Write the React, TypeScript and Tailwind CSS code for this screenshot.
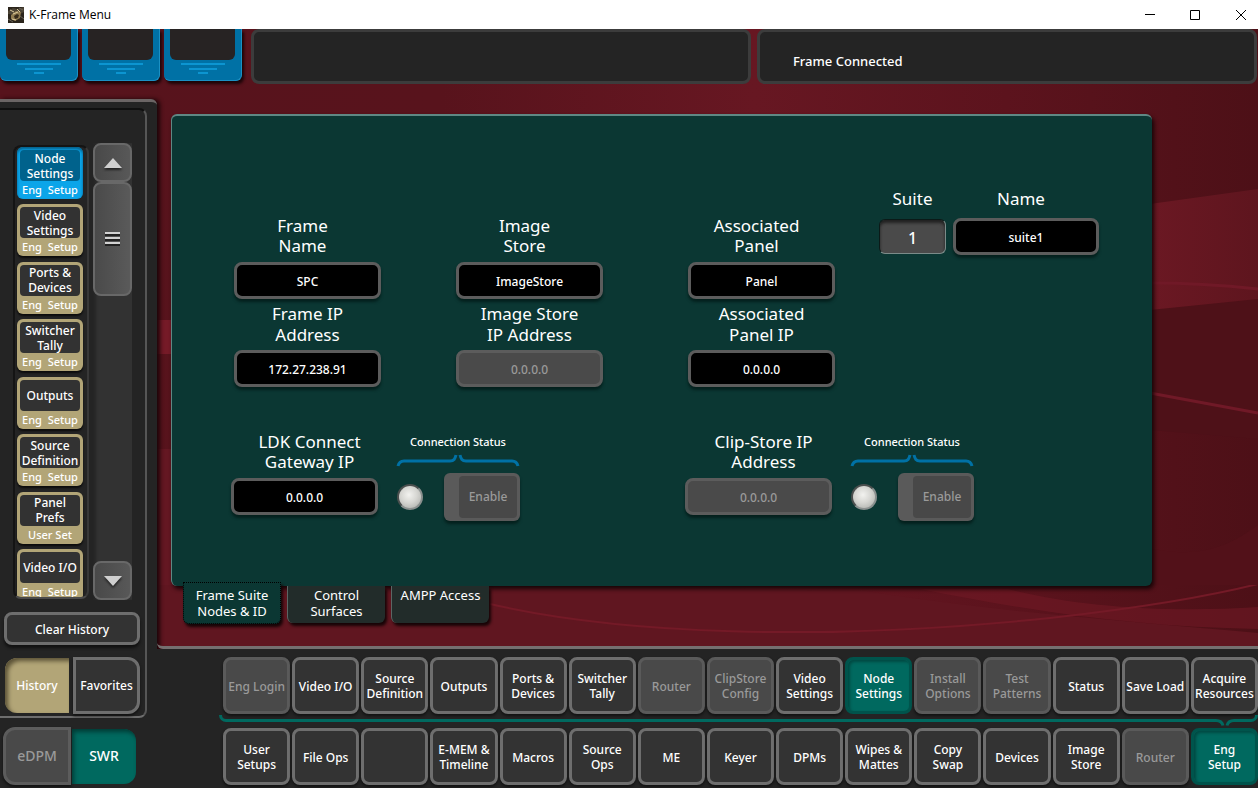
import clsx from "clsx";
import { useState } from "react";

const historyItems = [
    { name: "Node Settings", group: "Eng  Setup", active: true },
    { name: "Video Settings", group: "Eng  Setup" },
    { name: "Ports & Devices", group: "Eng  Setup" },
    { name: "Switcher Tally", group: "Eng  Setup" },
    { name: "Outputs", group: "Eng  Setup" },
    { name: "Source Definition", group: "Eng  Setup" },
    { name: "Panel Prefs", group: "User Set" },
    { name: "Video I/O", group: "Eng  Setup" },
];

type MenuButton = { name: string; state?: "active" | "disabled" };

const subMenu: MenuButton[] = [
    { name: "Eng Login", state: "disabled" },
    { name: "Video I/O" },
    { name: "Source Definition" },
    { name: "Outputs" },
    { name: "Ports & Devices" },
    { name: "Switcher Tally" },
    { name: "Router", state: "disabled" },
    { name: "ClipStore Config", state: "disabled" },
    { name: "Video Settings" },
    { name: "Node Settings", state: "active" },
    { name: "Install Options", state: "disabled" },
    { name: "Test Patterns", state: "disabled" },
    { name: "Status" },
    { name: "Save Load" },
    { name: "Acquire Resources" },
];

const mainMenu: MenuButton[] = [
    { name: "User Setups" },
    { name: "File Ops" },
    { name: "" },
    { name: "E-MEM & Timeline" },
    { name: "Macros" },
    { name: "Source Ops" },
    { name: "ME" },
    { name: "Keyer" },
    { name: "DPMs" },
    { name: "Wipes & Mattes" },
    { name: "Copy Swap" },
    { name: "Devices" },
    { name: "Image Store" },
    { name: "Router", state: "disabled" },
    { name: "Eng Setup", state: "active" },
];

const tabs = ["Frame Suite Nodes & ID", "Control Surfaces", "AMPP Access"];

const oneLine = ["Eng Login", "Video I/O", "File Ops", "Save Load"];

export default function App() {
    return (
        <div className="flex min-h-screen flex-col overflow-hidden bg-[#242424] font-['Noto_Sans','Open_Sans',sans-serif] text-xs font-medium text-white">
            <TitleBar />
            <div className="relative isolate flex flex-1 flex-col">
                <Backdrop />
                <StatusStrip />
                <div className="mt-4 flex flex-1">
                    <Sidebar />
                    <main className="flex min-w-0 flex-1 flex-col">
                        <div className="flex-1 rounded-bl-md border-b-[3px] border-[#757070] pt-[15px] pr-[106px] pb-5 pl-[14px]">
                            <NodePanel />
                            <PanelTabs />
                        </div>
                        <MenuBar />
                    </main>
                </div>
            </div>
        </div>
    );
}

function TitleBar() {
    return (
        <header className="flex h-[29px] items-center bg-white pl-2 text-black">
            <svg width="16" height="16" viewBox="0 0 16 16">
                <rect width="16" height="16" fill="#2b251c" />
                <path d="M0 4 5 1l4 1 7-2v5l-6 3-10-1z" fill="#4b4335" />
                <path d="M3 8 8 4l5 1-1 6-5 3-4-2z" fill="#8f7b50" />
                <path d="M6 9 9 7l2 1-1 3-3 1z" fill="#352b1b" />
                <path d="M2 3l4 2M9 2l3 3M5 7l5-2M4 12l4 1" stroke="#d9c99b" strokeWidth="1" />
                <path d="M0 12l5 3M12 9l4 3M11 1l4 2" stroke="#6a6357" strokeWidth="1" />
            </svg>
            <h1 className="ml-[5px] flex-1 font-['Open_Sans','Noto_Sans',sans-serif] text-xs font-normal">K-Frame Menu</h1>
            <button aria-label="Minimize" className="flex h-full w-[45px] items-center justify-center">
                <svg width="10" height="10" viewBox="0 0 10 10" stroke="black" fill="none"><path d="M0 4.5h10" /></svg>
            </button>
            <button aria-label="Maximize" className="flex h-full w-[45px] items-center justify-center">
                <svg width="10" height="10" viewBox="0 0 10 10" stroke="black" fill="none"><path d="M.5.5h9v9h-9z" /></svg>
            </button>
            <button aria-label="Close" className="flex h-full w-[41px] items-center justify-center pl-[6px]">
                <svg width="10" height="10" viewBox="0 0 10 10" stroke="black" fill="none"><path d="M0 0l10 10M10 0 0 10" /></svg>
            </button>
        </header>
    );
}

/* Red artwork behind everything */
function Backdrop() {
    return (
        <svg className="absolute inset-0 -z-10 h-full w-full" viewBox="0 0 1258 759" preserveAspectRatio="none">
            <defs>
                <linearGradient id="base" x1="0" y1="0" x2="1" y2="0">
                    <stop offset="0" stopColor="#57131c" />
                    <stop offset="0.35" stopColor="#58131c" />
                    <stop offset="0.6" stopColor="#671722" />
                    <stop offset="0.8" stopColor="#5c131d" />
                    <stop offset="1" stopColor="#4d1017" />
                </linearGradient>
                <linearGradient id="band" x1="0" y1="0" x2="1" y2="0">
                    <stop offset="0" stopColor="#6b1823" />
                    <stop offset="1" stopColor="#5e151e" />
                </linearGradient>
            </defs>
            <rect width="1258" height="759" fill="url(#base)" />
            <path d="M1150 175 1258 160v125l-108-3z" fill="url(#band)" />
            <path d="M1150 281 1258 270v140l-108-9z" fill="#4e1118" />
            <path d="M1150 254c40 0 80 3 108 6M1150 364l108 20" stroke="#701927" strokeWidth="3" fill="none" />
            <path d="M157 291h16v34h-16z" fill="#751a27" />
            <path d="M157 420h16v170h-16z" fill="#641722" />
            <path d="M157 556h330l380 6c120 20 260 30 391 42v14H157z" fill="#601620" />
            <path d="M920 560c120 24 220 38 338 40v-22c-90 6-180 0-250-18z" fill="#701925" opacity=".6" />
            <path d="M490 575c130 30 330 38 560 14 90-10 160-22 208-34" stroke="#741a27" strokeWidth="2" fill="none" />
            <path d="M1152 556h106v-60c-40 30-70 30-106 24z" fill="#521119" />
        </svg>
    );
}

function StatusStrip() {
    return (
        <div className="flex h-[54px]">
            <div className="flex w-[251px] gap-1">
                {[0, 1, 2].map((n) => (
                    <div key={n} className="h-[52px] w-[78px] rounded-b-md border-r border-b border-[#1b91c4] bg-[#0071a5] px-[6px] shadow-[2px_3px_3px_#1c0508]">
                        <div className="h-[31px] rounded-b-md bg-[#272323]" />
                        <svg className="mx-auto mt-[2px] block" width="44" height="14" viewBox="0 0 44 14" stroke="#11a1df" strokeWidth="1.5">
                            <path d="M0 2h44M8 7h28M17 11h10" />
                        </svg>
                    </div>
                ))}
            </div>
            <div className="mr-[6px] h-[55px] flex-1 rounded-lg border-[3px] border-[#3c3c3c] bg-[#242424]" />
            <div role="status" className="mr-px flex h-[55px] flex-1 items-center rounded-lg border-[3px] border-[#3c3c3c] bg-[#242424] text-[13px]">
                <span className="mt-[10px] ml-[33px]">Frame Connected</span>
            </div>
        </div>
    );
}

function Sidebar() {
    return (
        <aside className="flex w-[157px] shrink-0 flex-col rounded-tr-md border-t-[3px] border-[#6b6565] bg-[#242424] shadow-[3px_0_4px_#1c0508]">
            <div className="mt-[6px] mr-[10px] flex flex-col rounded-r-lg border-t-2 border-r-2 border-b-2 border-t-[#101010] border-r-[#565656] border-b-[#6e6e6e] pb-[2px]">
                <div className="mt-[33px] flex gap-1 pl-[13px]">
                    <div className="mt-[2px] h-[454px] w-[76px] overflow-hidden rounded-lg border-2 border-[#141414] border-r-[#383838] border-b-[#4a4a4a] px-[2px]">
                        {/* last entry is cut off by the scroll window */}
                        <ul className="flex h-[454px] flex-col justify-between">
                            {historyItems.map((item) => (
                                <HistoryItem key={item.name} {...item} />
                            ))}
                        </ul>
                    </div>
                    <Scrollbar />
                </div>
                <button className="mt-3 ml-1 h-[33px] w-[136px] rounded-lg border-[3px] border-[#6e6e6e] bg-[#333] pt-[2px] shadow-[0_3px_3px_#111]">
                    Clear History
                </button>
                <div className="mt-3 ml-[5px] flex h-[57px] items-center gap-1">
                    <button className="h-[55px] w-16 rounded-l-xl bg-[#b2a577] shadow-[inset_3px_3px_4px_#5c5337]">History</button>
                    <button className="h-[57px] w-[67px] rounded-r-xl border-[3px] border-[#6e6e6e] bg-[#333] shadow-[0_2px_3px_#111]">Favorites</button>
                </div>
            </div>
            <div className="mt-[9px] ml-[3px] flex h-[58px] items-center gap-px text-sm">
                <button className="h-[58px] w-[68px] rounded-l-xl border-[3px] border-[#5c5c5c] bg-[#494949] text-[#9a9a9a] shadow-[0_2px_3px_#111]">eDPM</button>
                <button className="h-[55px] w-16 rounded-r-xl bg-[#00695f] shadow-[inset_2px_3px_4px_#003c36]">SWR</button>
            </div>
        </aside>
    );
}

function HistoryItem({ name, group, active }: { name: string; group: string; active?: boolean }) {
    return (
        <li>
            <button
                className={clsx(
                    "flex h-[52px] w-[66px] flex-col rounded-md px-[3px] pt-[3px]",
                    active ? "bg-[#0ba5e9] shadow-[inset_0_2px_3px_#045c86]" : "bg-[#b2a577] shadow-[0_2px_2px_#0c0c0c]"
                )}
            >
                <span className={clsx("flex h-[31px] w-full shrink-0 items-center justify-center rounded leading-[15px]", active ? "bg-[#00628c]" : "bg-[#323232]")}>
                    <ButtonLabel name={name} />
                </span>
                <span className="w-full text-center text-[11px] leading-[17px] whitespace-pre">{group}</span>
            </button>
        </li>
    );
}

function Scrollbar() {
    return (
        <div className="flex h-[457px] w-[39px] flex-col bg-[#323232] shadow-[inset_3px_0_3px_#262626]">
            <ArrowButton label="Scroll up" points="0,10 9,0 18,10" />
            <div className="flex h-[114px] items-center justify-center rounded-lg border-2 border-[#686868] bg-linear-to-r from-[#4a4a4a] to-[#5a5a5a]">
                <svg width="15" height="14" viewBox="0 0 15 14">
                    <path d="M0 3h15M0 8h15M0 13h15" stroke="#222" strokeWidth="2" />
                    <path d="M0 1h15M0 6h15M0 11h15" stroke="#d2d2d2" strokeWidth="2" />
                </svg>
            </div>
            <div className="flex-1" />
            <ArrowButton label="Scroll down" points="0,0 9,10 18,0" />
        </div>
    );
}

function ArrowButton({ label, points }: { label: string; points: string }) {
    return (
        <button aria-label={label} className="flex h-[39px] items-center justify-center rounded-lg border-2 border-[#686868] bg-linear-to-r from-[#494949] to-[#585858]">
            <svg className="drop-shadow-[0_2px_1px_#222]" width="18" height="10" viewBox="0 0 18 10" fill="#cfcfcf">
                <polygon points={points} />
            </svg>
        </button>
    );
}

function NodePanel() {
    return (
        <section className="flex h-[472px] flex-col rounded-md border-t-2 border-l border-[#5f8884] bg-[#0b3733] pl-[59px] shadow-[2px_3px_4px_#160406]">
            <div className="mt-[73px] flex">
                <div className="mt-[27px] flex">
                    <FieldPair first="Frame Name" firstValue="SPC" second="Frame IP Address" secondValue="172.27.238.91" className="ml-[3px]" />
                    <FieldPair first="Image Store" firstValue="ImageStore" second="Image Store IP Address" secondValue="0.0.0.0" secondDisabled className="ml-[75px]" />
                    <FieldPair first="Associated Panel" firstValue="Panel" second="Associated Panel IP" secondValue="0.0.0.0" className="ml-[85px]" />
                </div>
                <div className="ml-11 flex gap-[7px]">
                    <div className="flex w-[67px] flex-col items-center">
                        <span className="text-[17px] leading-5 font-normal">Suite</span>
                        <button className="mt-[10px] h-[35px] w-full rounded-md border border-[#0b1a18] border-r-[#7b8b89] border-b-[#7b8b89] bg-[#4a4a4a] pt-[2px] text-base leading-5 shadow-[inset_0_3px_3px_#222]">1</button>
                    </div>
                    <div className="flex w-[146px] flex-col">
                        <label htmlFor="suite-name" className="pr-[10px] text-center text-[17px] leading-5 font-normal">Name</label>
                        <TextBox id="suite-name" value="suite1" className="mt-[9px]" />
                    </div>
                </div>
            </div>
            <div className="mt-[45px] flex">
                <StatusGroup label="LDK Connect Gateway IP" value="0.0.0.0" />
                <StatusGroup label="Clip-Store IP Address" value="0.0.0.0" disabled className="ml-[165px]" />
            </div>
        </section>
    );
}

type FieldPairProps = {
    first: string;
    firstValue: string;
    second: string;
    secondValue: string;
    secondDisabled?: boolean;
    className?: string;
};

function FieldPair({ first, firstValue, second, secondValue, secondDisabled, className }: FieldPairProps) {
    const id = first.toLowerCase().replace(" ", "-");
    return (
        <div className={clsx("flex w-[147px] flex-col", className)}>
            <label htmlFor={id} className="flex justify-center pr-[10px] text-center text-[17px] leading-5 font-normal">
                <span className="w-min">{first}</span>
            </label>
            <TextBox id={id} value={firstValue} className="mt-[6px]" />
            <label htmlFor={id + "-ip"} className="mt-1 flex justify-center text-center text-[17px] leading-[21px] font-normal">
                <span className="w-[105px]">{second}</span>
            </label>
            <TextBox id={id + "-ip"} value={secondValue} disabled={secondDisabled} className="mt-[5px]" />
        </div>
    );
}

function TextBox({ id, value, disabled, className }: { id: string; value: string; disabled?: boolean; className?: string }) {
    return (
        <input
            id={id}
            type="text"
            defaultValue={value}
            disabled={disabled}
            className={clsx(
                "h-[37px] w-full rounded-lg border-[3px] border-[#5c5c5c] pt-px text-center shadow-[0_3px_3px_#04201d]",
                disabled ? "bg-[#4a4a4a] text-[#9a9a9a]" : "bg-black text-white",
                className
            )}
        />
    );
}

function StatusGroup({ label, value, disabled, className }: { label: string; value: string; disabled?: boolean; className?: string }) {
    const id = label.toLowerCase().replaceAll(" ", "-");
    return (
        <div className={clsx("flex", className)}>
            <div className="flex w-[147px] flex-col">
                <label htmlFor={id} className="flex justify-center pl-[10px] text-center text-[17px] leading-5 font-normal">
                    <span className="w-[110px]">{label}</span>
                </label>
                <TextBox id={id} value={value} disabled={disabled} className="mt-[6px]" />
            </div>
            <div className="ml-[18px] flex w-[124px] flex-col">
                <span className="mt-[2px] text-center text-[11px] leading-4">Connection Status</span>
                <svg className="mt-[3px] block" width="124" height="14" viewBox="0 0 124 14" fill="none" stroke="#0071a5" strokeWidth="3">
                    <path d="M2 13c1-4 3-5 6-5h46c4 0 5-2 6-6M122 13c-1-4-3-5-6-5H70c-4 0-5-2-6-6" />
                </svg>
                <div className="mt-[6px] flex items-center justify-between pl-px">
                    <div className="size-[26px] rounded-full border-2 border-[#4b4f4e] border-r-[#8b908f] border-b-[#8b908f] bg-[radial-gradient(circle_at_45%_40%,#f2f2ef_0%,#d6d6d2_45%,#a5a7a3_100%)]" />
                    <button disabled className="h-[48px] w-[76px] rounded-md bg-[#5a5a5a] py-[3px] pr-[3px] pl-[15px] text-[#9a9a9a] shadow-[0_3px_3px_#04201d]">
                        <span className="flex h-full items-center justify-center rounded bg-[#484848]">Enable</span>
                    </button>
                </div>
            </div>
        </div>
    );
}

function PanelTabs() {
    const [current, setCurrent] = useState(0);
    return (
        <div role="tablist" className="flex items-start gap-[6px] pl-3 text-[13px] font-normal">
            {tabs.map((tab, i) => (
                <button
                    key={tab}
                    role="tab"
                    aria-selected={current === i}
                    onClick={() => setCurrent(i)}
                    className={clsx(
                        "flex w-[98px] justify-center rounded-b-md leading-4 shadow-[2px_3px_3px_#160406]",
                        current === i
                            ? "relative -mt-1 h-[42px] border border-dotted border-black bg-[#0b3733] pt-1"
                            : "h-[37px] border-l border-[#5b6664] bg-[#222c2a] pt-px"
                    )}
                >
                    <span className={tab === "Control Surfaces" ? "w-min" : ""}>{tab}</span>
                </button>
            ))}
        </div>
    );
}

function MenuBar() {
    return (
        <nav className="bg-[#242424] pt-2 pb-[3px] pl-[66px]">
            <ButtonRow items={subMenu} />
            {/* bracket linking the open menu to its sub menu */}
            <div className="-ml-1 flex h-[14px] items-start pt-px">
                <div className="h-[7px] flex-1 rounded-bl-lg border-b-[3px] border-l-[3px] border-b-[#00695f] border-l-[#00695f]" />
                <svg className="mt-[3px] shrink-0" width="18" height="9" viewBox="0 0 18 9" fill="none" stroke="#00695f" strokeWidth="3">
                    <path d="M0 2.500c4 0 6 1 7 5M18 2.500c-4 0-6 1-7 5" />
                </svg>
                <div className="h-[7px] w-6 rounded-br-lg border-r-[3px] border-b-[3px] border-[#00695f]" />
            </div>
            <ButtonRow items={mainMenu} />
        </nav>
    );
}

function ButtonRow({ items }: { items: MenuButton[] }) {
    return (
        <div className="grid grid-cols-[repeat(15,minmax(0,1fr))] gap-[2px]">
            {items.map((item, i) => (
                <button
                    key={i}
                    disabled={item.state === "disabled"}
                    aria-label={item.name || "Unassigned"}
                    className={clsx(
                        "flex h-[57px] items-center justify-center rounded-lg pt-px text-center leading-[15px]",
                        item.state === "active" && "border-[3px] border-[#00544c] bg-[#00695f] shadow-[inset_2px_2px_3px_#004a43]",
                        item.state === "disabled" && "border-[3px] border-[#5a5a5a] bg-[#494949] text-[#9a9a9a] shadow-[0_2px_3px_#111]",
                        !item.state && "border-[3px] border-[#6e6e6e] bg-[#333] shadow-[0_2px_3px_#111]"
                    )}
                >
                    <ButtonLabel name={item.name} />
                </button>
            ))}
        </div>
    );
}

function ButtonLabel({ name }: { name: string }) {
    return (
        <span className={oneLine.includes(name) ? "whitespace-nowrap" : "w-min"}>
            {name.replace(" &", "\u00a0&").replace("E-MEM", "E\u2011MEM")}
        </span>
    );
}
